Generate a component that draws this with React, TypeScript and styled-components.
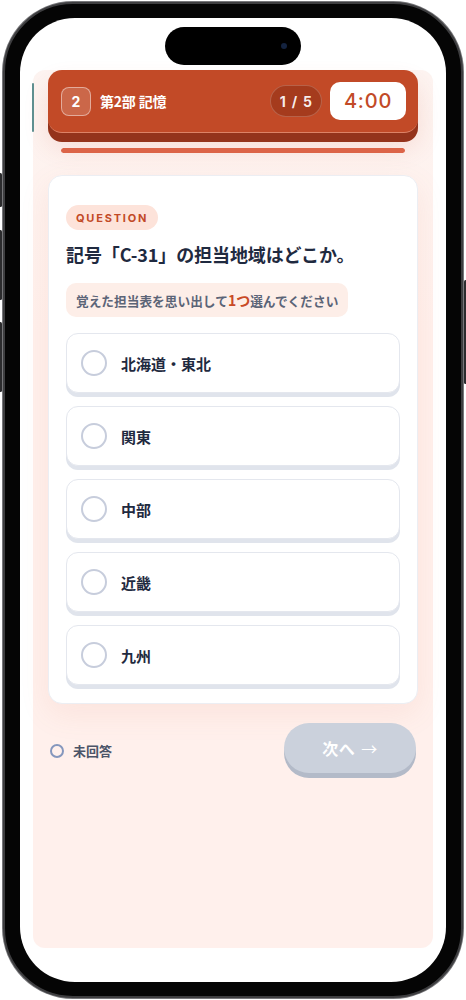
import React from "react";
import styled, { createGlobalStyle } from "styled-components";

const Global = createGlobalStyle`
  html, body { margin: 0; padding: 0; background: #ffffff; }
  body { font-family: "Noto Sans CJK JP", "Noto Sans", sans-serif; }
  * { box-sizing: border-box; }
`;

const Stage = styled.div`
  width: 466px;
  height: 1000px;
  padding: 2px 3px;
  background: #ffffff;
`;

const Phone = styled.div`
  position: relative;
  width: 460px;
  height: 996px;
  border-radius: 70px;
  border: 2px solid #3e3e40;
  background: #050505;
  padding: 14px 15px;
  box-shadow: 0 0 0 1px #77777a;
`;

const SideButton = styled.div<{ $side: "left" | "right"; $top: number; $h: number }>`
  position: absolute;
  ${(p) => (p.$side === "left" ? "left: -6px;" : "right: -6px;")}
  top: ${(p) => p.$top}px;
  width: 3px;
  height: ${(p) => p.$h}px;
  border-radius: 2px;
  background: #2c2c2e;
`;

const Island = styled.div`
  position: absolute;
  left: 160px;
  top: 23px;
  width: 136px;
  height: 38px;
  border-radius: 19px;
  background: #000;
  z-index: 5;
`;

const Camera = styled.div`
  position: absolute;
  left: 116px;
  top: 16px;
  width: 6px;
  height: 6px;
  border-radius: 50%;
  background: #14233f;
`;

const Screen = styled.div`
  width: 426px;
  height: 964px;
  border-radius: 55px;
  background: #ffffff;
  overflow: hidden;
  padding: 52px 13px 34px;
`;

const Panel = styled.div`
  position: relative;
  height: 100%;
  border-radius: 12px;
  background: linear-gradient(180deg, #fdf4f1 0%, #fff0ec 30%, #fff0ec 100%);
  padding: 0 15px;
  display: flex;
  flex-direction: column;

  &::before {
    content: "";
    position: absolute;
    left: -1px;
    top: 13px;
    width: 2px;
    height: 49px;
    border-radius: 1px;
    background: #5f8f90;
  }
`;

const Header = styled.header`
  height: 63px;
  border-radius: 14px;
  background: #c24a27;
  border-bottom: 1px solid rgba(255, 200, 180, 0.45);
  box-shadow: 0 9px 0 #94331b, 0 14px 26px rgba(196, 74, 40, 0.14);
  display: flex;
  align-items: center;
  padding: 0 12px 0 13px;
`;

const PartBadge = styled.div`
  width: 30px;
  height: 29px;
  border-radius: 8px;
  border: 1px solid rgba(255, 255, 255, 0.45);
  background: rgba(255, 255, 255, 0.16);
  color: #ffffff;
  font-family: Inter, "Noto Sans", sans-serif;
  font-size: 14px;
  font-weight: 700;
  display: flex;
  align-items: center;
  justify-content: center;
  margin-right: 9px;
`;

const PartTitle = styled.div`
  flex: 1;
  color: #ffffff;
  font-size: 14px;
  font-weight: 700;
  letter-spacing: -0.2px;
`;

const CountPill = styled.div`
  width: 52px;
  height: 32px;
  border-radius: 16px;
  background: rgba(90, 20, 5, 0.28);
  border: 1px solid rgba(255, 255, 255, 0.2);
  color: rgba(255, 255, 255, 0.92);
  font-family: Inter, "Noto Sans", sans-serif;
  font-size: 14px;
  font-weight: 700;
  word-spacing: 2px;
  letter-spacing: 0.3px;
  display: flex;
  align-items: center;
  justify-content: center;
  margin-right: 8px;
`;

const Timer = styled.div`
  width: 76px;
  height: 38px;
  border-radius: 10px;
  background: #ffffff;
  color: #c24a27;
  font-family: Inter, "Noto Sans", sans-serif;
  font-size: 20px;
  font-weight: 500;
  letter-spacing: 0.8px;
  display: flex;
  align-items: center;
  justify-content: center;
`;

const ProgressTrack = styled.div`
  margin: 15px 13px 0;
  height: 5px;
  border-radius: 3px;
  background: #f6d9cf;
  overflow: hidden;
`;

const ProgressFill = styled.div`
  height: 100%;
  border-radius: 3px;
  background: #dc6448;
`;

const Card = styled.section`
  margin-top: 22px;
  background: #ffffff;
  border-radius: 14px;
  border: 1px solid #eceef3;
  box-shadow: 0 10px 30px rgba(220, 120, 90, 0.1);
  padding: 29px 17px 18px;
  display: flex;
  flex-direction: column;
`;

const Chip = styled.div`
  align-self: flex-start;
  height: 25px;
  padding: 0 10px;
  border-radius: 13px;
  background: #fde3da;
  color: #c24a27;
  font-family: Inter, "Noto Sans", sans-serif;
  font-size: 11px;
  font-weight: 700;
  letter-spacing: 1.8px;
  display: flex;
  align-items: center;
`;

const QuestionText = styled.h2`
  margin: 13px 0 0;
  font-size: 18px;
  line-height: 23px;
  font-weight: 700;
  color: #1f2a40;
  letter-spacing: -0.1px;
`;

const Hint = styled.div`
  align-self: flex-start;
  margin-top: 17px;
  height: 34px;
  padding: 0 10px;
  border-radius: 10px;
  background: #fdeee8;
  color: #5b6477;
  font-size: 12.7px;
  font-weight: 700;
  display: flex;
  align-items: center;
`;

const Accent = styled.span`
  color: #c94a26;
  font-size: 14px;
`;

const OptionList = styled.div`
  margin-top: 16px;
  display: flex;
  flex-direction: column;
  gap: 13px;
`;

const Option = styled.button`
  height: 60px;
  width: 100%;
  border-radius: 12px;
  border: 1px solid #e4e7ee;
  background: #ffffff;
  box-shadow: 0 4px 0 #e0e4ec;
  display: flex;
  align-items: center;
  gap: 14px;
  padding: 0 14px;
  font-family: "Noto Sans CJK JP", sans-serif;
  font-size: 15px;
  font-weight: 700;
  color: #1f2a40;
  cursor: pointer;
  text-align: left;
`;

const Radio = styled.span`
  width: 26px;
  height: 26px;
  border-radius: 50%;
  border: 2px solid #c7cddc;
  flex: none;
`;

const Footer = styled.div`
  margin-top: 19px;
  padding: 0 2px;
  display: flex;
  align-items: flex-start;
  justify-content: space-between;
`;

const Status = styled.div`
  margin-top: 18px;
  display: flex;
  align-items: center;
  gap: 9px;
  font-size: 13px;
  font-weight: 700;
  color: #4b5468;
`;

const StatusDot = styled.span`
  width: 14px;
  height: 14px;
  border-radius: 50%;
  border: 2.5px solid #8597bd;
`;

const NextButton = styled.button`
  width: 132px;
  height: 50px;
  border-radius: 25px;
  border: none;
  background: #cbd1dc;
  box-shadow: 0 5px 0 #b3bac8;
  color: #ffffff;
  font-family: "Noto Sans CJK JP", sans-serif;
  font-size: 16px;
  font-weight: 700;
  letter-spacing: 0.5px;
  display: flex;
  align-items: center;
  justify-content: center;
  gap: 6px;
`;

const Arrow = styled.span`
  font-weight: 400;
`;

const options = ["北海道・東北", "関東", "中部", "近畿", "九州"];

export default function App() {
  const progress = 100;
  return (
    <>
      <Global />
      <Stage>
        <Phone>
          <SideButton $side="left" $top={169} $h={34} />
          <SideButton $side="left" $top={226} $h={70} />
          <SideButton $side="left" $top={318} $h={70} />
          <SideButton $side="right" $top={276} $h={104} />
          <Island>
            <Camera />
          </Island>
          <Screen>
            <Panel>
              <Header>
                <PartBadge>2</PartBadge>
                <PartTitle>第2部 記憶</PartTitle>
                <CountPill>1 / 5</CountPill>
                <Timer>4:00</Timer>
              </Header>
              <ProgressTrack>
                <ProgressFill style={{ width: `${progress}%` }} />
              </ProgressTrack>
              <Card>
                <Chip>QUESTION</Chip>
                <QuestionText>記号「C-31」の担当地域はどこか。</QuestionText>
                <Hint>
                  覚えた担当表を思い出して<Accent>1つ</Accent>選んでください
                </Hint>
                <OptionList>
                  {options.map((o) => (
                    <Option key={o}>
                      <Radio />
                      {o}
                    </Option>
                  ))}
                </OptionList>
              </Card>
              <Footer>
                <Status>
                  <StatusDot />
                  未回答
                </Status>
                <NextButton>
                  次へ <Arrow>→</Arrow>
                </NextButton>
              </Footer>
            </Panel>
          </Screen>
        </Phone>
      </Stage>
    </>
  );
}
